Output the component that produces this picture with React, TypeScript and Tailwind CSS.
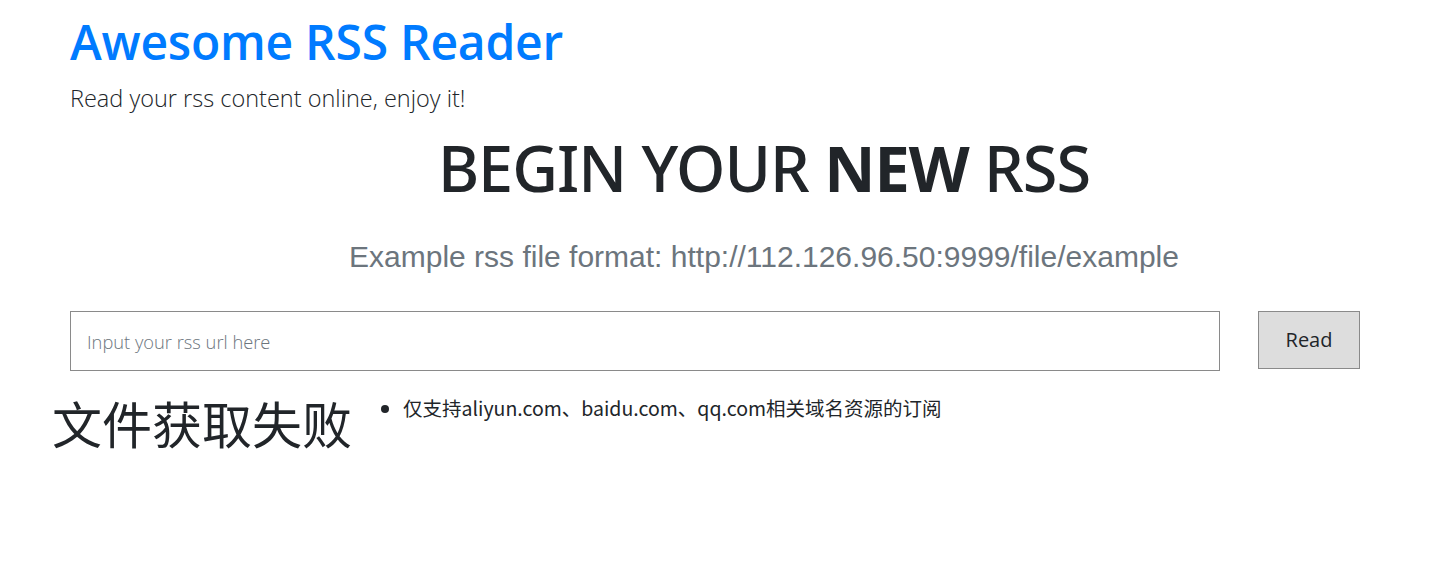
import React, { useState } from "react";

const sans = "font-['Open_Sans','Noto_Sans_CJK_SC',sans-serif]";

const App: React.FC = () => {
  const [url, setUrl] = useState("");

  return (
    <div className={`w-[1454px] h-[569px] bg-white text-[#212529] ${sans}`}>
      <header className="pl-[70px] pt-[12px]">
        <h1 className="text-[48px] leading-[60px] font-semibold text-[#007bff] tracking-[-0.25px]">
          Awesome RSS Reader
        </h1>
        <p className="mt-[11px] text-[23.5px] leading-[30px] font-light text-[#212529]">
          Read your rss content online, enjoy it!
        </p>
      </header>

      <section className="pl-[74px] text-center">
        <h2 className="mt-[15px] text-[63px] leading-[80px] font-medium tracking-[-1px] font-['Noto_Sans',sans-serif]">
          BEGIN YOUR <b className="font-bold">NEW</b> RSS
        </h2>
        <p className="mt-[29px] text-[30px] leading-[40px] text-[#6c757d] font-['Liberation_Sans',Arial,sans-serif]">
          Example rss file format: http://112.126.96.50:9999/file/example
        </p>
      </section>

      <div className="flex items-start gap-[38px] pl-[70px] mt-[34px]">
        <input
          value={url}
          onChange={(e) => setUrl(e.target.value)}
          placeholder="Input your rss url here"
          className="w-[1150px] h-[60px] border border-[#8a8a8a] px-[16px] text-[18.3px] font-light outline-none placeholder:text-[#6c757d]"
        />
        <button className="w-[102px] h-[58px] bg-[#dddddd] border border-[#8a8a8a] text-[20px] text-[#212529]">
          Read
        </button>
      </div>

      <div className="flex items-start pl-[52px] mt-[24px]">
        <h3 className="text-[50px] leading-[60px] font-normal">文件获取失败</h3>
        <ul className="ml-[31px] mt-0 list-disc pl-[20px] text-[19.5px] leading-[26px] font-['Noto_Sans_CJK_SC',sans-serif]">
          <li>仅支持aliyun.com、baidu.com、qq.com相关域名资源的订阅</li>
        </ul>
      </div>
    </div>
  );
};

export default App;
